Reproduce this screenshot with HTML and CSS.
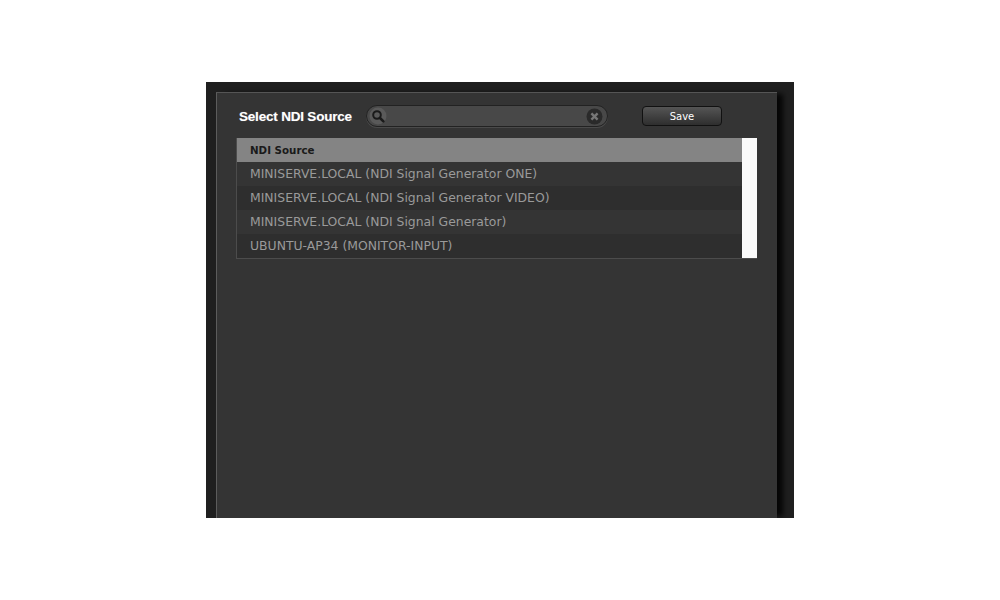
FILE: index.html
```html
<!DOCTYPE html>
<html>

<head>
  <title>Select NDI Source</title>
  <link rel="stylesheet" href="styles.css">
</head>

<body>
  <div class="dialog">
    <div class="panel">
      <div class="toolbar">
        <div class="title">Select NDI Source</div>
        <div class="search">
          <svg class="search-icon" width="18" height="18" viewBox="0 0 18 18">
            <circle cx="9" cy="9" r="8.5" fill="#5a5a5a"/>
            <circle cx="8" cy="8" r="3.8" fill="none" stroke="#1a1a1a" stroke-width="2"/>
            <path d="M11 11l3.4 3.4" stroke="#1a1a1a" stroke-width="2.6" stroke-linecap="round"/>
          </svg>
          <svg class="clear-icon" width="17" height="17" viewBox="0 0 17 17">
            <circle cx="8.5" cy="8.5" r="8" fill="#2a2a2a"/>
            <path d="M5.4 5.4l6.2 6.2M11.6 5.4l-6.2 6.2" stroke="#777" stroke-width="2.4"/>
          </svg>
        </div>
        <button class="save">Save</button>
      </div>
      <div class="sources">
        <div class="list">
          <div class="list-head">NDI Source</div>
          <div class="row">MINISERVE.LOCAL (NDI Signal Generator ONE)</div>
          <div class="row">MINISERVE.LOCAL (NDI Signal Generator VIDEO)</div>
          <div class="row">MINISERVE.LOCAL (NDI Signal Generator)</div>
          <div class="row">UBUNTU-AP34 (MONITOR-INPUT)</div>
        </div>
        <div class="scroller"></div>
      </div>
    </div>
  </div>
</body>

</html>
```

FILE: styles.css
```css
body {
  margin: 0;
  background: #fff;
  font-family: "Liberation Sans", Arial, sans-serif;
}
.dialog {
  width: 578px;
  height: 426px;
  margin: 82px auto 0;
  padding: 10px 0 0 10px;
  background: #1f1f1f;
  overflow: hidden;
}
.panel {
  width: 561px;
  height: 426px;
  background: #343434;
  border-top: 1px solid #555;
  border-left: 1px solid #5c5c5c;
  box-shadow: 8px 0 5px -2px #060606;
  box-sizing: border-box;
  padding: 12px 19px 0;
}
.toolbar {
  display: flex;
  align-items: center;
  height: 22px;
  margin-bottom: 11px;
}
.title {
  width: 127px;
  margin-left: 3px;
  font-size: 13.5px;
  font-weight: bold;
  letter-spacing: -0.2px;
  color: #fff;
  text-shadow: 0 0 1px rgba(255, 255, 255, 0.4);
}
.search {
  display: flex;
  align-items: center;
  justify-content: space-between;
  width: 242px;
  height: 22px;
  box-sizing: border-box;
  padding: 0 3px 0 2px;
  border: 1px solid #222;
  border-radius: 11px;
  background: #484848;
  box-shadow: 0 1px 0 #4a4a4a;
}
.clear-icon {
  margin-right: 1px;
}
.save {
  width: 80px;
  height: 20px;
  margin-left: 34px;
  padding: 0;
  border: 1px solid #111;
  border-radius: 4px;
  background: linear-gradient(#555, #2e2e2e);
  color: #fff;
  font-family: "DejaVu Sans", sans-serif;
  font-size: 10px;
}
.sources {
  display: flex;
  width: 521px;
  height: 121px;
  border: 1px solid #4c4c4c;
  border-top: 0;
  border-right: 0;
  box-sizing: border-box;
}
.list {
  flex: 1;
}
.list-head {
  height: 24px;
  line-height: 25px;
  padding-left: 13px;
  background: #848484;
  color: #1a1a1a;
  font-family: "DejaVu Sans", sans-serif;
  font-size: 10.3px;
  font-weight: bold;
}
.row {
  height: 24px;
  line-height: 24px;
  padding-left: 13px;
  color: #9a9a9a;
  font-family: "DejaVu Sans", sans-serif;
  font-size: 12.4px;
}
.row:nth-child(even) {
  background: #343434;
}
.row:nth-child(odd) {
  background: #2e2e2e;
}
.scroller {
  width: 15px;
  background: #fafafa;
}
```
